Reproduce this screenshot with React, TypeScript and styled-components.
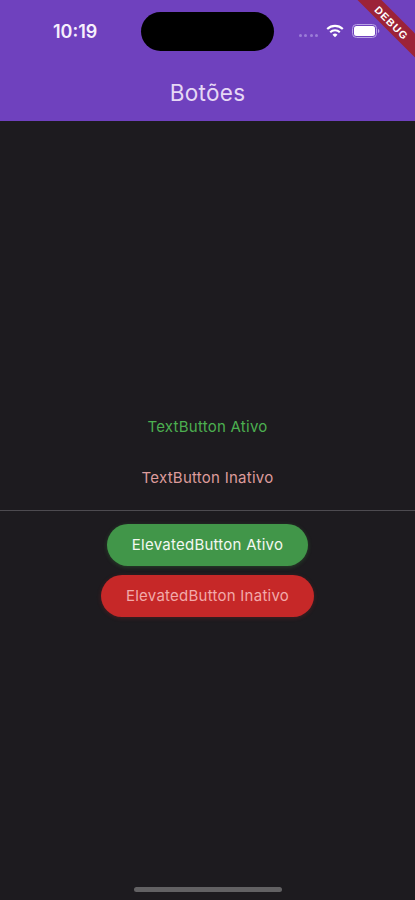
import React from "react";
import styled, { createGlobalStyle } from "styled-components";

const GlobalStyle = createGlobalStyle`
  html, body {
    margin: 0;
    padding: 0;
    background-color: #1d1b1f;
  }
  body {
    font-family: Inter, "Liberation Sans", sans-serif;
  }
`;

const Screen = styled.div`
  position: relative;
  width: 415px;
  height: 900px;
  overflow: hidden;
  display: flex;
  flex-direction: column;
  background-color: #1d1b1f;
`;

const Header = styled.header`
  flex: 0 0 121px;
  display: flex;
  flex-direction: column;
  background-color: #6f41be;
`;

const StatusBar = styled.div`
  flex: 0 0 62px;
  display: flex;
  align-items: center;
  justify-content: space-between;
  padding: 0 35px 0 53px;
`;

const Clock = styled.span`
  padding-top: 1px;
  font-size: 18px;
  font-weight: 600;
  color: #f6effc;
`;

const Island = styled.div`
  position: absolute;
  top: 12px;
  left: 141px;
  width: 133px;
  height: 39px;
  border-radius: 20px;
  background-color: #000;
`;

const StatusIcons = styled.div`
  display: flex;
  align-items: center;
  gap: 8px;
`;

const Signal = styled.div`
  display: flex;
  gap: 2.5px;
  margin-top: 8px;
`;

const SignalDot = styled.span`
  width: 3px;
  height: 3px;
  border-radius: 50%;
  background-color: #9b7dd8;
`;

const Title = styled.h1`
  flex: 1;
  margin: 0;
  padding-top: 1px;
  display: flex;
  align-items: center;
  justify-content: center;
  font-size: 22.5px;
  font-weight: 400;
  letter-spacing: 0.3px;
  color: #e6d8f5;
`;

const Body = styled.main`
  flex: 1;
  display: flex;
  flex-direction: column;
  align-items: center;
  justify-content: center;
`;

const TextButton = styled.button<{ $tone: string }>`
  height: 51px;
  padding: 1px 16px 0;
  border: none;
  background: none;
  font-family: inherit;
  font-size: 15px;
  font-weight: 400;
  letter-spacing: 0.25px;
  color: ${(p) => p.$tone};
`;

const Divider = styled.hr`
  align-self: stretch;
  flex: 0 0 1px;
  margin: 8px 0;
  border: none;
  background-color: #4d4b50;
`;

const ButtonSlot = styled.div`
  height: 51px;
  display: flex;
  align-items: center;
`;

const ElevatedButton = styled.button<{ $bg: string; $fg: string; $glow: string }>`
  height: 42px;
  padding: 0 25px;
  border: none;
  border-radius: 21px;
  font-family: inherit;
  font-size: 15px;
  font-weight: 400;
  letter-spacing: 0.25px;
  background-color: ${(p) => p.$bg};
  color: ${(p) => p.$fg};
  box-shadow: 0 1px 4px ${(p) => p.$glow};
`;

const HomeIndicator = styled.div`
  position: absolute;
  left: 134px;
  bottom: 8px;
  width: 148px;
  height: 5px;
  border-radius: 3px;
  background-color: #626163;
`;

const RibbonCorner = styled.div`
  position: absolute;
  top: 0;
  right: 0;
  width: 70px;
  height: 70px;
  overflow: hidden;
`;

const Ribbon = styled.div`
  position: absolute;
  top: 14px;
  left: -3px;
  width: 100px;
  height: 17px;
  display: flex;
  align-items: center;
  justify-content: center;
  transform: rotate(45deg);
  background-color: #9c2338;
  color: #fff;
  font-family: "Liberation Sans", sans-serif;
  font-size: 10.5px;
  font-weight: 700;
  letter-spacing: 1px;
`;

const Wifi = () => (
  <svg width="18" height="14" viewBox="0 0 18 14" fill="none" stroke="#fff" strokeWidth="2.1">
    <path d="M1.2 5a11.200 11.200 0 0 1 15.600 0" />
    <path d="M4.200 8.200a7 7 0 0 1 9.600 0" />
    <path d="M6.500 10.800a3.600 3.600 0 0 1 5 0L9 13.300z" fill="#fff" stroke="none" />
  </svg>
);

const Battery = () => (
  <svg width="28" height="14" viewBox="0 0 28 14">
    <rect x="0.5" y="0.5" width="24" height="13" rx="4" fill="none" stroke="#b9a3e6" />
    <rect x="2" y="2" width="21" height="10" rx="2.5" fill="#fff" />
    <path d="M26 5v4c.8-.3 1.300-1.100 1.300-2S26.800 5.300 26 5z" fill="#b9a3e6" />
  </svg>
);

const App: React.FC = () => {
  return (
    <>
      <GlobalStyle />
      <Screen>
        <Header>
          <StatusBar>
            <Clock>10:19</Clock>
            <StatusIcons>
              <Signal>
                <SignalDot />
                <SignalDot />
                <SignalDot />
                <SignalDot />
              </Signal>
              <Wifi />
              <Battery />
            </StatusIcons>
          </StatusBar>
          <Title>Botões</Title>
        </Header>
        <Island />
        <Body>
          <TextButton $tone="#4caf50">TextButton Ativo</TextButton>
          <TextButton $tone="#dd9c9c">TextButton Inativo</TextButton>
          <Divider />
          <ButtonSlot>
            <ElevatedButton $bg="#419649" $fg="#f3f8f1" $glow="rgba(67, 160, 71, 0.3)">
              ElevatedButton Ativo
            </ElevatedButton>
          </ButtonSlot>
          <ButtonSlot>
            <ElevatedButton $bg="#c62828" $fg="#f2aaaa" $glow="rgba(198, 40, 40, 0.25)">
              ElevatedButton Inativo
            </ElevatedButton>
          </ButtonSlot>
        </Body>
        <HomeIndicator />
        <RibbonCorner>
          <Ribbon>DEBUG</Ribbon>
        </RibbonCorner>
      </Screen>
    </>
  );
};

export default App;
